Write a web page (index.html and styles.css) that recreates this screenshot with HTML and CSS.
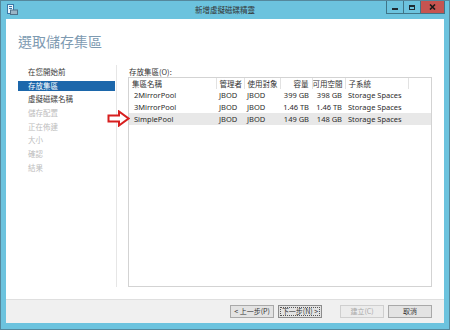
FILE: index.html
```html
<!DOCTYPE html>
<html lang="zh-Hant">
<head>
<meta charset="utf-8">
<link rel="stylesheet" href="styles.css">
</head>
<body>
<div class="window">
  <div class="titlebar">
    <div class="tb-left">
      <svg class="app-icon" width="11" height="11" viewBox="0 0 11 11">
        <rect x="0.5" y="0.5" width="6" height="9" fill="#eef6fb" stroke="#3a78a8"/>
        <rect x="2" y="2" width="3" height="1" fill="#3a78a8"/>
        <rect x="2" y="4" width="3" height="1" fill="#3a78a8"/>
        <rect x="3.5" y="6" width="7" height="4.5" fill="#9ab4c6" stroke="#4f6f88" stroke-width="1"/>
      </svg>
    </div>
    <div class="title">新增虛擬磁碟精靈</div>
    <div class="controls">
      <div class="ctl min"><span class="min-bar"></span></div>
      <div class="ctl max"><span class="max-box"></span></div>
      <div class="ctl close"><svg width="7" height="6" viewBox="0 0 7 6"><path d="M1 0.5 L6 5.5 M6 0.5 L1 5.5" stroke="#1a1a1a" stroke-width="1.6"/></svg></div>
    </div>
  </div>
  <div class="client">
    <div class="content">
      <h1 class="heading">選取儲存集區</h1>
      <div class="body">
        <nav class="steps">
          <div class="step">在您開始前</div>
          <div class="step active">存放集區</div>
          <div class="step">虛擬磁碟名稱</div>
          <div class="step disabled">儲存配置</div>
          <div class="step disabled">正在佈建</div>
          <div class="step disabled">大小</div>
          <div class="step disabled">確認</div>
          <div class="step disabled">結果</div>
        </nav>
        <div class="main">
          <div class="label">存放集區(O):</div>
          <div class="table-wrap">
            <table class="pools">
              <colgroup>
                <col class="c1"><col class="c2"><col class="c3"><col class="c4"><col class="c5"><col class="c6"><col class="c7">
              </colgroup>
              <thead>
                <tr>
                  <th>集區名稱</th>
                  <th>管理者</th>
                  <th>使用對象</th>
                  <th class="num">容量</th>
                  <th class="num">可用空間</th>
                  <th>子系統</th>
                  <th class="last"></th>
                </tr>
              </thead>
              <tbody>
                <tr>
                  <td class="name">2MirrorPool</td><td>JBOD</td><td>JBOD</td><td class="num">399 GB</td><td class="num">398 GB</td><td>Storage Spaces</td><td></td>
                </tr>
                <tr>
                  <td class="name">3MirrorPool</td><td>JBOD</td><td>JBOD</td><td class="num">1.46 TB</td><td class="num">1.46 TB</td><td>Storage Spaces</td><td></td>
                </tr>
                <tr class="hl">
                  <td class="name">SimplePool</td><td>JBOD</td><td>JBOD</td><td class="num">149 GB</td><td class="num">148 GB</td><td>Storage Spaces</td><td></td>
                </tr>
              </tbody>
            </table>
          </div>
          <svg class="arrow" width="23" height="17" viewBox="0 0 23 17">
            <path d="M1.5 5.5 H12 V1.5 L21.5 8.5 L12 15.5 V11.5 H1.5 Z" fill="#fff" stroke="#d71f1f" stroke-width="2" stroke-linejoin="miter"/>
          </svg>
        </div>
      </div>
    </div>
    <div class="footer">
      <button class="btn">&lt; 上一步(P)</button>
      <button class="btn focus">下一步(N) &gt;</button>
      <button class="btn disabled gap">建立(C)</button>
      <button class="btn">取消</button>
    </div>
  </div>
</div>
</body>
</html>
```
FILE: styles.css
```css
* { box-sizing: border-box; }
html, body { margin: 0; padding: 0; background: #fff; }
body {
  font-family: "Noto Sans", "Noto Sans CJK TC", sans-serif;
  font-size: 7.5px;
  color: #2a2a2a;
}
.window {
  width: 450px;
  height: 330px;
  border: 1px solid #55889c;
  background: #6cc3de;
  display: flex;
  flex-direction: column;
}
.titlebar {
  height: 18px;
  display: grid;
  grid-template-columns: 1fr auto 1fr;
  align-items: start;
}
.tb-left { padding: 3px 0 0 6px; }
.app-icon { display: block; }
.title {
  line-height: 18px;
  color: #333;
  font-size: 7.5px;
  font-family: "Noto Sans CJK TC", sans-serif;
}
.controls {
  justify-self: end;
  display: flex;
  margin-right: 4px;
  height: 13px;
}
.ctl {
  height: 13px;
  display: flex;
  align-items: center;
  justify-content: center;
  border-bottom: 1px solid #3f7487;
  border-left: 1px solid #3f7487;
}
.min, .max { width: 17px; background: #6cc3de; }
.min { align-items: flex-end; padding-bottom: 3px; }
.min-bar { width: 6px; height: 2px; background: #1f2b33; display: block; }
.max-box { width: 6px; height: 5px; border: 1px solid #1f2b33; border-top-width: 2px; display: block; }
.close { width: 25px; background: #c65450; border-right: 1px solid #3f7487; }
.close svg { display: block; }

.client {
  flex: 1;
  margin: 0 5px 6px 5px;
  background: #fff;
  display: flex;
  flex-direction: column;
}
.content {
  flex: 1;
  padding: 14px 12px 0 12px;
  display: flex;
  flex-direction: column;
}
.heading {
  margin: 0;
  font-family: "Noto Sans CJK TC", sans-serif;
  font-weight: normal;
  font-size: 14px;
  line-height: 16px;
  color: #7d9ab1;
  letter-spacing: 0;
}
.body {
  display: flex;
  margin-top: 16px;
  height: 222px;
}
.steps {
  width: 99px;
  padding-top: 2px;
  display: flex;
  flex-direction: column;
  gap: 3.7px;
  border-right: 1px solid #e6e6e6;
}
.step {
  height: 10px;
  line-height: 10px;
  padding-left: 10px;
  color: #3c3c3c;
  font-family: "Noto Sans CJK TC", sans-serif;
  font-size: 7.5px;
}
.step.active { background: #1c67ab; color: #fff; margin-right: 1px; }
.step.disabled { color: #bdbdbd; }

.main {
  position: relative;
  flex: 1;
  padding-left: 11px;
  display: flex;
  flex-direction: column;
}
.label {
  padding-top: 2px;
  height: 12px;
  line-height: 10px;
  padding-left: 1px;
  font-family: "Noto Sans CJK TC", sans-serif;
  color: #333;
}
.table-wrap {
  flex: 1;
  border: 1px solid #d3d3d3;
  margin-top: 0;
}
.pools {
  width: 100%;
  table-layout: fixed;
  border-collapse: collapse;
}
.c1 { width: 87px; }
.c2 { width: 28px; }
.c3 { width: 36px; }
.c4 { width: 32px; }
.c5 { width: 33px; }
.c6 { width: 63px; }
.pools th {
  height: 11px;
  font-weight: normal;
  text-align: left;
  padding: 0 0 0 3px;
  line-height: 11px;
  border-right: 1px solid #e2e2e2;
  color: #333;
  font-family: "Noto Sans CJK TC", sans-serif;
  white-space: nowrap;
  overflow: hidden;
}
.pools th.last { border-right: none; }
.pools td {
  height: 12px;
  line-height: 12px;
  padding: 0 0 0 3px;
  white-space: nowrap;
  overflow: hidden;
  color: #2c2c2c;
}
.pools th.num, .pools td.num { text-align: right; padding: 0 3px 0 0; }
.pools td.name { padding-left: 5px; }
.pools tr.hl td { background: #e8e8e8; }

.arrow {
  position: absolute;
  left: -10px;
  top: 45px;
}

.footer {
  height: 24px;
  background: #f0f0f0;
  border-top: 1px solid #dfdfdf;
  display: flex;
  justify-content: flex-end;
  align-items: flex-start;
  padding: 5px 12px 0 0;
  gap: 4px;
}
.btn {
  width: 44px;
  height: 13px;
  padding: 0;
  margin: 0;
  background: #e3e3e3;
  border: 1px solid #a9a9a9;
  font-family: "Noto Sans CJK TC", sans-serif;
  font-size: 7px;
  line-height: 11px;
  color: #333;
}
.btn.focus { outline: 1px dotted #555; outline-offset: -3px; border-color: #8c8c8c; }
.btn.disabled { color: #a8a8a8; border-color: #cfcfcf; background: #ececec; }
.btn.gap { margin-left: 14px; }
```
